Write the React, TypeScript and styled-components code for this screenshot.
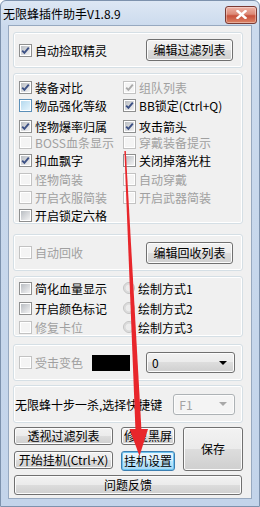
import styled, { createGlobalStyle } from 'styled-components'

const GlobalStyle = createGlobalStyle`
  body {
    margin: 0;
    font-family: "Noto Sans CJK SC", "Microsoft YaHei", sans-serif;
    font-size: 12px;
  }
`

const Window = styled.div`
  position: relative;
  width: 260px;
  height: 507px;
  box-sizing: border-box;
  display: flex;
  flex-direction: column;
  background: linear-gradient(#dde7f4, #cbdaed 26px, #c3d4ea);
  border: 1px solid #7d92ad;
  border-radius: 6px 6px 0 0;
  overflow: hidden;
`

const TitleBar = styled.div`
  height: 24px;
  display: flex;
  align-items: center;
  justify-content: space-between;
  padding: 1px 2px 0 2px;
  box-sizing: border-box;
  flex: none;
`

const Title = styled.span`
  font-size: 12px;
  color: #000;
  line-height: 16px;
`

const CloseButton = styled.div`
  width: 32px;
  height: 18px;
  box-sizing: border-box;
  margin-top: 2px;
  border: 1px solid #7a3a33;
  border-radius: 3px;
  background: linear-gradient(#eeb3a6, #dc8a77 45%, #c8513c 55%, #dc8466);
  box-shadow: inset 0 0 0 1px rgba(255, 255, 255, 0.35);
  display: flex;
  align-items: center;
  justify-content: center;
`

const Client = styled.div`
  flex: 1;
  margin: 0 7px 7px 7px;
  background: #f0f0f0;
  border: 1px solid #97a9c0;
  padding: 0 8px 0 4px;
  display: flex;
  flex-direction: column;
`

const Group = styled.div<{ $mt: number; $h: number }>`
  box-sizing: border-box;
  margin-top: ${(p) => p.$mt}px;
  height: ${(p) => p.$h}px;
  border: 1px solid #d5dfe5;
  border-radius: 3px;
  box-shadow: inset 0 0 0 1px #fff;
`

const Line = styled(Group)`
  display: flex;
  align-items: center;
  justify-content: space-between;
  padding: 0 9px 0 5px;
`

const Rows = styled(Group)`
  display: flex;
  flex-direction: column;
  padding-left: 5px;
`

const Row = styled.div<{ $mt: number }>`
  display: grid;
  grid-template-columns: 104px 1fr;
  height: 16px;
  margin-top: ${(p) => p.$mt}px;
`

const Strip = styled(Group)<{ $pl: number }>`
  display: flex;
  align-items: center;
  padding-left: ${(p) => p.$pl}px;
`

const Check = styled.label<{ $dis?: boolean; $w?: number }>`
  display: flex;
  align-items: center;
  gap: 3px;
  height: 16px;
  white-space: nowrap;
  color: ${(p) => (p.$dis ? '#a0a0a0' : '#000')};
  ${(p) => (p.$w ? `width: ${p.$w}px;` : '')}
`

const Box = styled.span<{ $dis?: boolean; $hot?: boolean }>`
  position: relative;
  flex: none;
  width: 13px;
  height: 13px;
  box-sizing: border-box;
  border: 1px solid ${(p) => (p.$dis ? '#c2c2c2' : p.$hot ? '#5b8fb8' : '#8e8f8f')};
  background: #fff;
  &::before {
    content: '';
    position: absolute;
    inset: 1px;
    background: ${(p) =>
      p.$dis
        ? '#f4f4f4'
        : p.$hot
          ? 'linear-gradient(135deg, #b4d9ee, #e4f4fc)'
          : 'linear-gradient(135deg, #b9bdc2, #f2f2f3)'};
  }
  svg {
    position: absolute;
    left: 0;
    top: 0;
  }
`

const RadioDot = styled.span`
  flex: none;
  width: 12px;
  height: 12px;
  box-sizing: border-box;
  border-radius: 50%;
  border: 1px solid #c2c2c2;
  background: radial-gradient(circle, #ececec 0 3px, #d6d6d6 4px, #f4f4f4 6px);
`

const Btn = styled.button<{ $w?: number; $h?: number; $hot?: boolean }>`
  font: inherit;
  font-size: 12px;
  color: #000;
  padding: 0;
  box-sizing: border-box;
  width: ${(p) => (p.$w ? `${p.$w}px` : '100%')};
  height: ${(p) => p.$h ?? 22}px;
  border: 1px solid ${(p) => (p.$hot ? '#3c7fb1' : '#707070')};
  border-radius: 3px;
  background: ${(p) =>
    p.$hot
      ? 'linear-gradient(#eaf6fd, #d9f0fc 50%, #bee6fd 50%, #a7d9f5)'
      : 'linear-gradient(#f2f2f2, #ebebeb 50%, #dddddd 50%, #cfcfcf)'};
  box-shadow: inset 0 0 0 1px ${(p) => (p.$hot ? '#6fc3ee' : '#fcfcfc')};
  line-height: 1;
`

const Swatch = styled.div`
  width: 38px;
  height: 16px;
  background: #000;
  flex: none;
`

const Combo = styled.div<{ $dis?: boolean; $w: number; $ml: number }>`
  box-sizing: border-box;
  width: ${(p) => p.$w}px;
  height: 21px;
  margin-left: ${(p) => p.$ml}px;
  border: 1px solid ${(p) => (p.$dis ? '#adb2b5' : '#707070')};
  border-radius: 3px;
  background: ${(p) =>
    p.$dis ? '#f4f4f4' : 'linear-gradient(#f2f2f2, #ebebeb 50%, #dddddd 50%, #cfcfcf)'};
  box-shadow: inset 0 0 0 1px #fcfcfc;
  color: ${(p) => (p.$dis ? '#a3a3a3' : '#000')};
  display: flex;
  align-items: center;
  justify-content: space-between;
  padding: 0 7px 0 5px;
  flex: none;
`

const Caption = styled.span`
  white-space: nowrap;
  color: #000;
`

const Buttons = styled.div`
  display: grid;
  grid-template-columns: 99px 54px 60px;
  grid-template-rows: 18px 18px;
  column-gap: 8px;
  row-gap: 6px;
  margin: 4px 0 0 1px;
`

const SaveCell = styled.div`
  grid-row: 1 / span 2;
  grid-column: 3;
  display: flex;
`

const Footer = styled.div`
  margin: 6px 0 0 1px;
  width: 228px;
`

const Overlay = styled.svg`
  position: absolute;
  left: 0;
  top: 0;
  pointer-events: none;
`

type BoxState = 'on' | 'off' | 'hot' | 'dis' | 'disOn'

const Tick = ({ color }: { color: string }) => (
  <svg width="11" height="11" viewBox="0 0 11 11">
    <path d="M2.2 5.6 L4.4 7.9 L8.8 2.6" fill="none" stroke={color} strokeWidth="1.9" />
  </svg>
)

const CheckItem = ({ text, state, w }: { text: string; state: BoxState; w?: number }) => {
  const dis = state === 'dis' || state === 'disOn'
  return (
    <Check $dis={dis} $w={w}>
      <Box $dis={dis} $hot={state === 'hot'}>
        {state === 'on' && <Tick color="#3d5185" />}
        {state === 'disOn' && <Tick color="#aaaaaa" />}
      </Box>
      {text}
    </Check>
  )
}

const RadioItem = ({ text }: { text: string }) => (
  <Check>
    <RadioDot />
    {text}
  </Check>
)

const Arrow = ({ dis }: { dis?: boolean }) => (
  <svg width="8" height="4" viewBox="0 0 8 4">
    <path d="M0 0 H8 L4 4 Z" fill={dis ? '#a8a8a8' : '#000'} />
  </svg>
)

const mainRows: { mt: number; left: [string, BoxState]; right?: [string, BoxState] }[] = [
  { mt: 5, left: ['装备对比', 'on'], right: ['组队列表', 'disOn'] },
  { mt: 2, left: ['物品强化等级', 'hot'], right: ['BB锁定(Ctrl+Q)', 'on'] },
  { mt: 5, left: ['怪物爆率归属', 'on'], right: ['攻击箭头', 'on'] },
  { mt: 0, left: ['BOSS血条显示', 'dis'], right: ['穿戴装备提示', 'dis'] },
  { mt: 2, left: ['扣血飘字', 'on'], right: ['关闭掉落光柱', 'off'] },
  { mt: 3, left: ['怪物简装', 'dis'], right: ['自动穿戴', 'dis'] },
  { mt: 2, left: ['开启衣服简装', 'dis'], right: ['开启武器简装', 'dis'] },
  { mt: 2, left: ['开启锁定六格', 'off'] },
]

const drawRows: { mt: number; left: [string, BoxState]; right: string }[] = [
  { mt: 3, left: ['简化血量显示', 'off'], right: '绘制方式1' },
  { mt: 4, left: ['开启颜色标记', 'off'], right: '绘制方式2' },
  { mt: 3, left: ['修复卡位', 'dis'], right: '绘制方式3' },
]

export default function App() {
  return (
    <Window>
      <GlobalStyle />
      <TitleBar>
        <Title>无限蜂插件助手V1.8.9</Title>
        <CloseButton>
          <svg width="11" height="9" viewBox="0 0 11 9">
            <path d="M1.5 1 L9.5 8 M9.5 1 L1.5 8" stroke="#fff" strokeWidth="2.4" strokeLinecap="square" />
          </svg>
        </CloseButton>
      </TitleBar>
      <Client>
        <Line $mt={6} $h={36}>
          <CheckItem text="自动捡取精灵" state="on" />
          <Btn $w={87} $h={22}>编辑过滤列表</Btn>
        </Line>
        <Rows $mt={5} $h={151}>
          {mainRows.map((r) => (
            <Row key={r.left[0]} $mt={r.mt}>
              <CheckItem text={r.left[0]} state={r.left[1]} />
              {r.right && <CheckItem text={r.right[0]} state={r.right[1]} />}
            </Row>
          ))}
        </Rows>
        <Line $mt={10} $h={37}>
          <CheckItem text="自动回收" state="dis" />
          <Btn $w={87} $h={22}>编辑回收列表</Btn>
        </Line>
        <Rows $mt={5} $h={61}>
          {drawRows.map((r) => (
            <Row key={r.right} $mt={r.mt}>
              <CheckItem text={r.left[0]} state={r.left[1]} />
              <RadioItem text={r.right} />
            </Row>
          ))}
        </Rows>
        <Strip $mt={7} $h={37} $pl={5}>
          <CheckItem text="受击变色" state="dis" w={73} />
          <Swatch />
          <Combo $w={89} $ml={16}>
            <span>0</span>
            <Arrow />
          </Combo>
        </Strip>
        <Strip $mt={4} $h={38} $pl={1}>
          <Caption>无限蜂十步一杀,选择快捷键</Caption>
          <Combo $dis $w={62} $ml={11}>
            <span>F1</span>
            <Arrow dis />
          </Combo>
        </Strip>
        <Buttons>
          <Btn $h={18}>透视过滤列表</Btn>
          <Btn $h={18}>修复黑屏</Btn>
          <SaveCell>
            <Btn $h={44}>保存</Btn>
          </SaveCell>
          <Btn $h={18}>开始挂机(Ctrl+X)</Btn>
          <Btn $h={20} $hot>挂机设置</Btn>
        </Buttons>
        <Footer>
          <Btn $h={20}>问题反馈</Btn>
        </Footer>
      </Client>
      <Overlay width="260" height="507" viewBox="0 0 260 507">
        <polygon points="123.4,150 124.8,150 140.5,430 134.5,430" fill="#e8262b" />
        <polygon points="128.5,428 147,428 138.5,455" fill="#e8262b" />
      </Overlay>
    </Window>
  )
}
